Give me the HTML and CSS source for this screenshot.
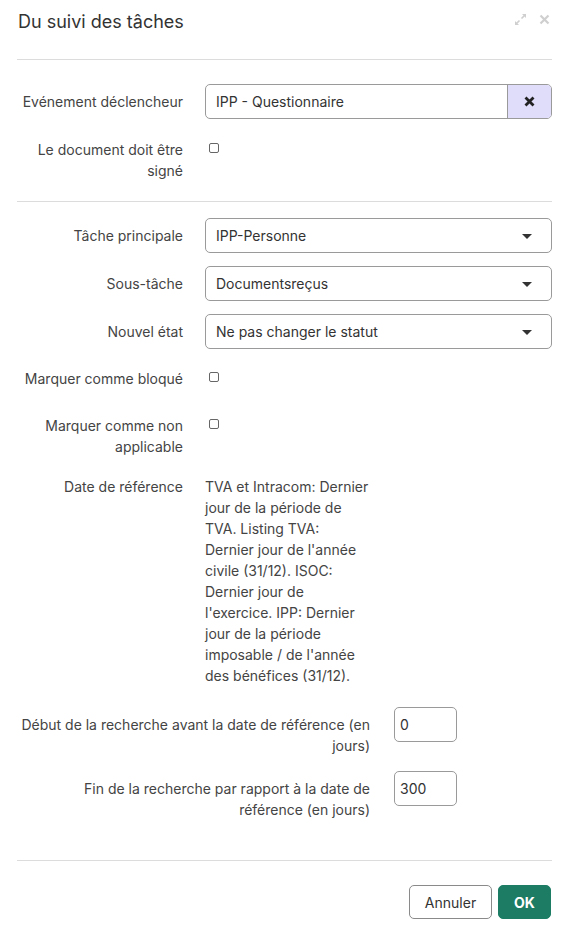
FILE: index.html
```html
<!DOCTYPE html>
<html lang="fr">
<head>
<meta charset="utf-8">
<title>Du suivi des tâches</title>
<link rel="stylesheet" href="styles.css">
</head>
<body>
<div class="dialog">
  <div class="header">
    <h1 class="title">Du suivi des tâches</h1>
    <div class="header-tools">
      <svg class="tool-expand" width="13" height="13" viewBox="0 0 13 13">
        <path d="M8 1h4v4z M5 12H1V8z" fill="#cfcfcf"/>
        <path d="M11 2L7.5 5.5 M2 11l3.5-3.5" stroke="#cfcfcf" stroke-width="1.6"/>
      </svg>
      <svg class="tool-close" width="11" height="11" viewBox="0 0 11 11">
        <path d="M1.5 1.5l8 8 M9.5 1.5l-8 8" stroke="#cfcfcf" stroke-width="2.2"/>
      </svg>
    </div>
  </div>

  <div class="section section-top">
    <div class="row">
      <div class="label">Evénement déclencheur</div>
      <div class="field">
        <div class="control control-clear">
          <span class="value">IPP - Questionnaire</span>
          <span class="clear-btn">
            <svg width="11" height="11" viewBox="0 0 11 11"><path d="M1.5 1.5l8 8 M9.5 1.5l-8 8" stroke="#222" stroke-width="2.8"/></svg>
          </span>
        </div>
      </div>
    </div>
    <div class="row row-gap">
      <div class="label">Le document doit être signé</div>
      <div class="field"><span class="check"></span></div>
    </div>
  </div>

  <div class="section section-main">
    <div class="row">
      <div class="label">Tâche principale</div>
      <div class="field"><div class="control select"><span class="value">IPP-Personne</span><span class="caret"></span></div></div>
    </div>
    <div class="row row-gap">
      <div class="label">Sous-tâche</div>
      <div class="field"><div class="control select"><span class="value">Documentsreçus</span><span class="caret"></span></div></div>
    </div>
    <div class="row row-gap">
      <div class="label">Nouvel état</div>
      <div class="field"><div class="control select"><span class="value">Ne pas changer le statut</span><span class="caret"></span></div></div>
    </div>
    <div class="row row-check">
      <div class="label">Marquer comme bloqué</div>
      <div class="field"><span class="check"></span></div>
    </div>
    <div class="row row-check">
      <div class="label">Marquer comme non applicable</div>
      <div class="field"><span class="check"></span></div>
    </div>
    <div class="row row-check row-static">
      <div class="label">Date de référence</div>
      <div class="field"><p class="static">TVA et Intracom: Dernier jour de la période de TVA. Listing TVA: Dernier jour de l'année civile (31/12). ISOC: Dernier jour de l'exercice. IPP: Dernier jour de la période imposable / de l'année des bénéfices (31/12).</p></div>
    </div>
    <div class="row row-wide row-check">
      <div class="label">Début de la recherche avant la date de référence (en jours)</div>
      <div class="field"><div class="control number">0</div></div>
    </div>
    <div class="row row-wide row-last">
      <div class="label">Fin de la recherche par rapport à la date de référence (en jours)</div>
      <div class="field"><div class="control number">300</div></div>
    </div>
  </div>

  <div class="footer">
    <button class="btn btn-cancel">Annuler</button>
    <button class="btn btn-ok">OK</button>
  </div>
</div>
</body>
</html>
```

FILE: styles.css
```css
html, body {
  margin: 0;
  padding: 0;
  background: #ffffff;
}

body {
  font-family: Inter, "Noto Sans", "Liberation Sans", sans-serif;
  font-size: 14px;
  color: #444444;
}

.dialog {
  padding: 0 23px 0 17px;
}

.header {
  height: 60px;
  box-sizing: border-box;
  padding-top: 10px;
  display: flex;
  justify-content: space-between;
  align-items: flex-start;
  border-bottom: 1px solid #dcdcdc;
}

.title {
  margin: 0 0 0 1px;
  font-size: 18px;
  line-height: 24px;
  font-weight: 400;
  color: #333333;
}

.header-tools {
  display: flex;
  align-items: center;
  gap: 12px;
  padding-top: 3px;
  margin-right: 2px;
}

.section {
  border-bottom: 1px solid #dcdcdc;
}

.section-top {
  padding: 24px 0 20px;
}

.section-main {
  padding: 16px 0 40px;
}

.row {
  display: flex;
  align-items: flex-start;
}

.row-gap {
  margin-top: 13px;
}

.row-check {
  margin-top: 12px;
  min-height: 35px;
}

.row-static {
  padding-bottom: 9px;
}

.row-last {
  margin-top: 15px;
}

.label {
  width: 166px;
  flex-shrink: 0;
  margin-right: 22px;
  padding-top: 7px;
  line-height: 21px;
  text-align: right;
  color: #444444;
}

.row-wide .label {
  width: 353px;
  margin-right: 24px;
}

.field {
  flex: 1;
  min-width: 0;
}

.control {
  height: 35px;
  box-sizing: border-box;
  border: 1px solid #9a9a9a;
  border-radius: 5px;
  display: flex;
  align-items: center;
  color: #333333;
  background: #ffffff;
}

.value {
  flex: 1;
  padding-left: 10px;
  white-space: nowrap;
}

.control-clear {
  overflow: hidden;
}

.clear-btn {
  width: 43px;
  height: 100%;
  background: #e0ddfb;
  border-left: 1px solid #9a9a9a;
  display: flex;
  align-items: center;
  justify-content: center;
}

.select {
  padding-right: 19px;
}

.caret {
  width: 0;
  height: 0;
  border-left: 5px solid transparent;
  border-right: 5px solid transparent;
  border-top: 5px solid #333333;
  margin-top: 2px;
}

.check {
  display: block;
  width: 10px;
  height: 10px;
  box-sizing: border-box;
  border: 1.5px solid #666666;
  border-radius: 2px;
  margin: 11px 0 0 4px;
}

.static {
  margin: 0;
  width: 166px;
  padding-top: 7px;
  line-height: 21px;
  color: #444444;
}

.number {
  width: 63px;
  padding-left: 5px;
}

.footer {
  padding-top: 24px;
  display: flex;
  justify-content: flex-end;
  gap: 6px;
}

.btn {
  height: 34px;
  box-sizing: border-box;
  border-radius: 5px;
  font-family: Inter, "Noto Sans", "Liberation Sans", sans-serif;
  font-size: 14px;
  cursor: pointer;
}

.btn-cancel {
  width: 83px;
  background: #ffffff;
  border: 1px solid #8a8a8a;
  color: #333333;
}

.btn-ok {
  width: 53px;
  margin-right: 1px;
  background: #1c7d64;
  border: 1px solid #1c7d64;
  color: #ffffff;
  font-weight: 700;
}
```
